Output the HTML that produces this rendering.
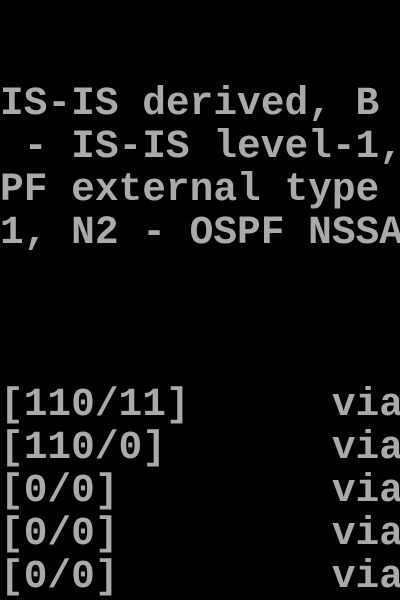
<!DOCTYPE html>
<html><head><style>
html,body{margin:0;padding:0;background:#000;width:400px;height:600px;overflow:hidden}
pre{position:absolute;left:0;top:82px;margin:0;font-family:"Liberation Mono",monospace;font-weight:bold;font-size:39.5px;line-height:43px;color:#aaaaaa;white-space:pre}
</style></head><body>
<pre>IS-IS derived, B
 - IS-IS level-1,
PF external type
1, N2 - OSPF NSSA



[110/11]      via
[110/0]       via
[0/0]         via
[0/0]         via
[0/0]         via</pre>
</body></html>
